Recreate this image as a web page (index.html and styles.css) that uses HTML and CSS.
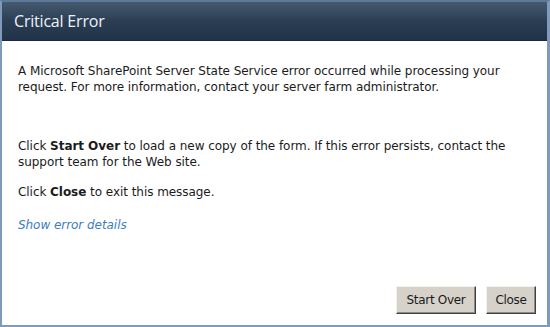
FILE: index.html
```html
<!DOCTYPE html>
<html lang="en">
<head>
    <meta charset="UTF-8">
    <title>Critical Error</title>
    <link rel="stylesheet" href="styles.css">
</head>
<body>
    <div class="dialog">
        <div class="dialog-title">Critical Error</div>
        <div class="dialog-body">
            <p class="first">A Microsoft SharePoint Server State Service error occurred while processing your request. For more information, contact your server farm administrator.</p>
            <p class="gap">Click <b>Start Over</b> to load a new copy of the form. If this error persists, contact the support team for the Web site.</p>
            <p>Click <b>Close</b> to exit this message.</p>
            <a class="details" href="#">Show error details</a>
        </div>
        <div class="dialog-buttons">
            <button type="button" class="button">Start Over</button>
            <button type="button" class="button">Close</button>
        </div>
    </div>
</body>
</html>
```

FILE: styles.css
```css
html, body {
    margin: 0;
    padding: 0;
    background: #ffffff;
}

.dialog {
    width: 550px;
    height: 327px;
    box-sizing: border-box;
    border: 2px solid #7f9abb;
    border-right-width: 3px;
    border-top: 2px solid #5d7898;
    display: flex;
    flex-direction: column;
    background: #ffffff;
    font-family: Tahoma, 'DejaVu Sans', sans-serif;
}

.dialog-title {
    height: 38px;
    line-height: 38px;
    padding-left: 12px;
    background: linear-gradient(to bottom, #45596f, #2b3e54 50%, #213348);
    border-bottom: 1px solid #1a2838;
    color: #eef3f9;
    font-family: 'Open Sans', 'Segoe UI', sans-serif;
    font-size: 16px;
    letter-spacing: -0.2px;
}

.dialog-body {
    flex: 1;
    padding: 22px 16px 0 16px;
    color: #1b1b1b;
    font-size: 12px;
    font-family: 'DejaVu Sans', Tahoma, sans-serif;
    letter-spacing: -0.05px;
    line-height: 16px;
}

.dialog-body p {
    margin: 0 0 14px 0;
}

.dialog-body p.first {
    margin-bottom: 0;
}

.dialog-body p.gap {
    margin-top: 43px;
}

.details {
    display: block;
    margin-top: 17px;
    color: #3d7ec0;
    font-style: italic;
    text-decoration: none;
}

.dialog-buttons {
    display: flex;
    justify-content: flex-end;
    gap: 10px;
    padding: 0 11px 11px 0;
}

.button {
    height: 28px;
    padding: 0 4px;
    background: #d6d2ca;
    border: 1px solid;
    border-color: #f4f2ee #404040 #404040 #f4f2ee;
    box-shadow: inset -1px -1px 0 #8c8a86;
    color: #1a1a1a;
    font-family: 'DejaVu Sans', Tahoma, sans-serif;
    font-size: 12px;
    letter-spacing: -0.3px;
}

.button:first-child {
    width: 80px;
}

.button:last-child {
    width: 50px;
}
```
